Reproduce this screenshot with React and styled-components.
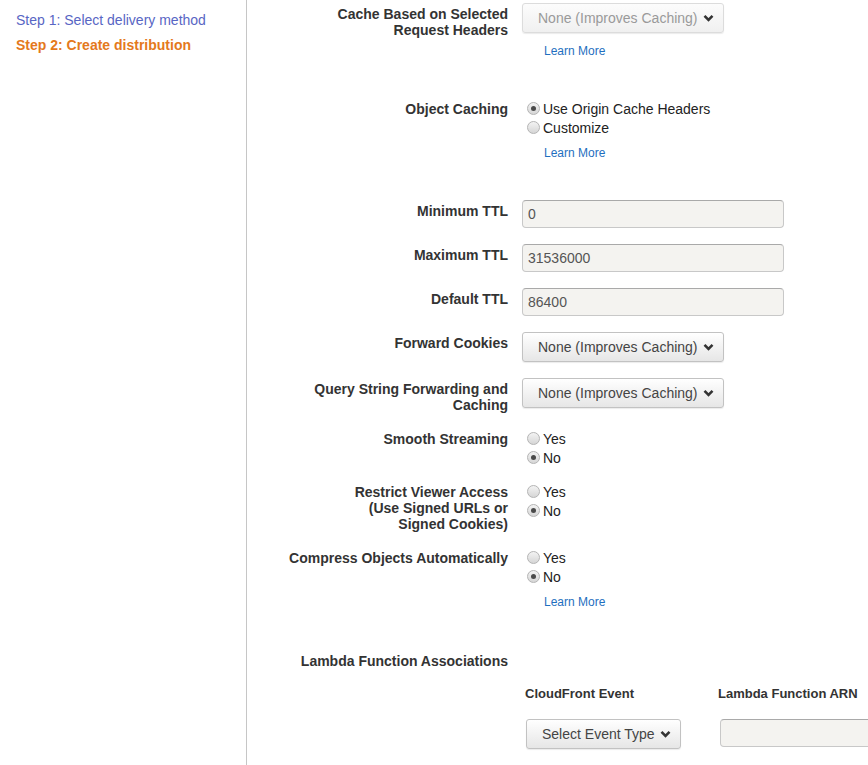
import styled, { createGlobalStyle } from "styled-components"

const GlobalStyle = createGlobalStyle`
    html, body {
        margin: 0;
        padding: 0;
        overflow: hidden;
        background: #fff;
        font-family: "Liberation Sans", Arial, sans-serif;
    }
`

function Chevron() {
    return (
        <svg width="11" height="8" viewBox="0 0 11 8">
            <polyline points="1.5,1.8 5.5,5.8 9.5,1.8" fill="none" stroke="#333" strokeWidth="2.6" />
        </svg>
    )
}

function Radios({ options, selected }) {
    return (
        <RadioGroup>
            {options.map((opt) => (
                <RadioOption key={opt}>
                    <RadioDot $checked={opt === selected} />
                    {opt}
                </RadioOption>
            ))}
        </RadioGroup>
    )
}

export default function App() {
    return (
        <>
            <GlobalStyle />
            <Page>
                <Sidebar>
                    <StepLink>Step 1: Select delivery method</StepLink>
                    <StepLink $current>Step 2: Create distribution</StepLink>
                </Sidebar>
                <Main>
                    <Row $top={3} $space={41}>
                        <Label $pad={3}>Cache Based on Selected<br />Request Headers</Label>
                        <Field>
                            <Select $disabled>
                                <span>None (Improves Caching)</span>
                                <Chevron />
                            </Select>
                            <LearnMore $top={11}>Learn More</LearnMore>
                        </Field>
                    </Row>

                    <Row $space={40}>
                        <Label $pad={2}>Object Caching</Label>
                        <Field>
                            <Radios options={["Use Origin Cache Headers", "Customize"]} selected="Use Origin Cache Headers" />
                            <LearnMore $top={9}>Learn More</LearnMore>
                        </Field>
                    </Row>

                    <Row $space={16}>
                        <Label $pad={3}>Minimum TTL</Label>
                        <Field><TextInput>0</TextInput></Field>
                    </Row>
                    <Row $space={16}>
                        <Label $pad={3}>Maximum TTL</Label>
                        <Field><TextInput>31536000</TextInput></Field>
                    </Row>
                    <Row $space={16}>
                        <Label $pad={3}>Default TTL</Label>
                        <Field><TextInput>86400</TextInput></Field>
                    </Row>

                    <Row $space={16}>
                        <Label $pad={3}>Forward Cookies</Label>
                        <Field>
                            <Select>
                                <span>None (Improves Caching)</span>
                                <Chevron />
                            </Select>
                        </Field>
                    </Row>
                    <Row $space={16}>
                        <Label $pad={3}>Query String Forwarding and<br />Caching</Label>
                        <Field>
                            <Select>
                                <span>None (Improves Caching)</span>
                                <Chevron />
                            </Select>
                        </Field>
                    </Row>

                    <Row $space={15}>
                        <Label $pad={2}>Smooth Streaming</Label>
                        <Field><Radios options={["Yes", "No"]} selected="No" /></Field>
                    </Row>
                    <Row $space={16}>
                        <Label $pad={2}>Restrict Viewer Access<br />(Use Signed URLs or<br />Signed Cookies)</Label>
                        <Field><Radios options={["Yes", "No"]} selected="No" /></Field>
                    </Row>
                    <Row $space={44}>
                        <Label $pad={2}>Compress Objects Automatically</Label>
                        <Field>
                            <Radios options={["Yes", "No"]} selected="No" />
                            <LearnMore $top={9}>Learn More</LearnMore>
                        </Field>
                    </Row>

                    <Row $space={17}>
                        <Label>Lambda Function Associations</Label>
                    </Row>

                    <LambdaGrid>
                        <ColumnHead>CloudFront Event</ColumnHead>
                        <ColumnHead>Lambda Function ARN</ColumnHead>
                        <Select $inset>
                            <span>Select Event Type</span>
                            <Chevron />
                        </Select>
                        <TextInput $wide />
                    </LambdaGrid>
                </Main>
            </Page>
        </>
    )
}

const Page = styled.div`
    display: flex;
    width: 868px;
    height: 765px;
    overflow: hidden;
`

const Sidebar = styled.nav`
    width: 247px;
    flex-shrink: 0;
    border-right: 1px solid #c6c6c6;
    padding: 12px 0 0 16px;
    box-sizing: border-box;
    display: flex;
    flex-direction: column;
    gap: 9px;
`

const StepLink = styled.a`
    font-size: 14px;
    line-height: 16px;
    color: ${(p) => (p.$current ? "#e4791c" : "#5866c4")};
    font-weight: ${(p) => (p.$current ? "bold" : "normal")};
    cursor: pointer;
`

const Main = styled.main`
    flex: 1;
    display: flex;
    flex-direction: column;
    min-width: 0;
`

const Row = styled.div`
    display: grid;
    grid-template-columns: 261px 1fr;
    column-gap: 14px;
    margin-top: ${(p) => p.$top || 0}px;
    margin-bottom: ${(p) => p.$space}px;
`

const Label = styled.div`
    text-align: right;
    font-size: 14px;
    line-height: 16px;
    font-weight: bold;
    color: #333;
    padding-top: ${(p) => p.$pad || 0}px;
`

const Field = styled.div`
    display: flex;
    flex-direction: column;
    align-items: flex-start;
`

const Select = styled.button`
    justify-self: start;
    display: inline-flex;
    align-items: center;
    gap: 5px;
    height: 30px;
    padding: 0 9px 0 15px;
    margin-left: ${(p) => (p.$inset ? 1 : 0)}px;
    font-family: inherit;
    font-size: 14px;
    color: ${(p) => (p.$disabled ? "#9a9a9a" : "#444")};
    background: ${(p) =>
        p.$disabled
            ? "linear-gradient(#fcfcfc, #f0f0f0)"
            : "linear-gradient(#ffffff, #e6e6e6)"};
    border: 1px solid ${(p) => (p.$disabled ? "#dcdcdc" : "#c2c2c2")};
    border-radius: 3px;
    box-shadow: 0 1px 1px rgba(0, 0, 0, 0.08);
    cursor: pointer;
    white-space: nowrap;
`

const TextInput = styled.div`
    box-sizing: border-box;
    width: ${(p) => (p.$wide ? "240px" : "262px")};
    height: 28px;
    padding: 0 5px;
    margin-left: ${(p) => (p.$wide ? 2 : 0)}px;
    display: flex;
    align-items: center;
    background: #f4f3f0;
    border: 1px solid #c8c8c8;
    border-top-color: #a9a9a9;
    border-radius: 4px;
    font-size: 14px;
    color: #555;
`

const RadioGroup = styled.div`
    display: flex;
    flex-direction: column;
`

const RadioOption = styled.label`
    display: flex;
    align-items: center;
    height: 19px;
    font-size: 14px;
    color: #222;
`

const RadioDot = styled.span`
    position: relative;
    box-sizing: border-box;
    width: 13px;
    height: 13px;
    margin: 0 3px 0 5px;
    border-radius: 50%;
    border: 1px solid #b4b4b4;
    background: linear-gradient(#f3f3f3, #d6d6d6);
    ${(p) =>
        p.$checked &&
        `
        &::after {
            content: "";
            position: absolute;
            left: 3px;
            top: 3px;
            width: 5px;
            height: 5px;
            border-radius: 50%;
            background: #4a4a4a;
        }
    `}
`

const LearnMore = styled.a`
    margin-top: ${(p) => p.$top}px;
    margin-left: 22px;
    font-size: 12px;
    line-height: 14px;
    color: #1f6fc0;
    cursor: pointer;
`

const LambdaGrid = styled.div`
    display: grid;
    grid-template-columns: 193px 1fr;
    row-gap: 17px;
    margin-left: 278px;
    align-items: start;
`

const ColumnHead = styled.div`
    font-size: 13px;
    line-height: 16px;
    font-weight: bold;
    color: #333;
`
